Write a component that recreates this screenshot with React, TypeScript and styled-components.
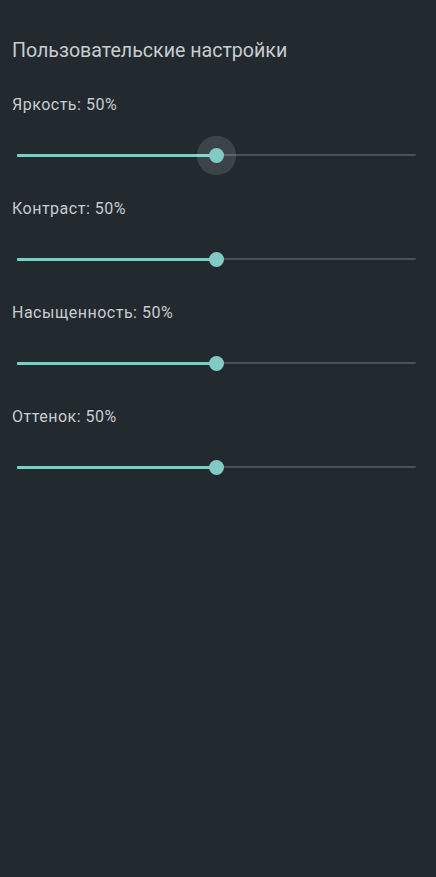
import React, { useState } from "react";
import styled, { createGlobalStyle } from "styled-components";

const GlobalStyle = createGlobalStyle`
  html, body {
    margin: 0;
    padding: 0;
    background: #222a30;
  }
  body {
    font-family: Roboto, "Noto Sans", sans-serif;
  }
`;

const Page = styled.div`
  min-height: 877px;
  background: #222a30;
  padding: 39px 12px 0 12px;
  box-sizing: border-box;
  color: #c8cccf;
`;

const Title = styled.h1`
  margin: 0 0 32px 0;
  font-size: 19.6px;
  line-height: 24px;
  font-weight: 400;
  color: #c8cccf;
`;

const Section = styled.div`
  display: flex;
  flex-direction: column;
`;

const Label = styled.div`
  font-size: 16px;
  line-height: 20px;
  letter-spacing: 0.5px;
  color: #c8cccf;
`;

const SliderRow = styled.div`
  position: relative;
  height: 22px;
  margin: 29px 8px 33px 5px;
  display: flex;
  align-items: center;
`;

const Track = styled.div`
  position: relative;
  flex: 1;
  height: 2px;
  background: #4b5257;
  border-radius: 1px;
`;

const Fill = styled.div<{ $value: number }>`
  position: absolute;
  left: 0;
  top: -0.5px;
  height: 3px;
  width: ${(p) => p.$value}%;
  background: #80cbc4;
  border-radius: 1px;
`;

const Thumb = styled.div<{ $value: number; $focused?: boolean }>`
  position: absolute;
  top: 50%;
  left: ${(p) => p.$value}%;
  width: 15px;
  height: 15px;
  margin: -7.5px 0 0 -7.5px;
  border-radius: 50%;
  background: #80cbc4;
  box-shadow: ${(p) => (p.$focused ? "0 0 0 12px rgba(255,255,255,0.12)" : "none")};
`;

type Item = { label: string; value: number };

function Slider({ value, focused }: { value: number; focused?: boolean }) {
  return (
    <SliderRow>
      <Track>
        <Fill $value={value} />
        <Thumb $value={value} $focused={focused} />
      </Track>
    </SliderRow>
  );
}

export default function App() {
  const [items] = useState<Item[]>([
    { label: "Яркость", value: 50 },
    { label: "Контраст", value: 50 },
    { label: "Насыщенность", value: 50 },
    { label: "Оттенок", value: 50 },
  ]);

  return (
    <>
      <GlobalStyle />
      <Page>
        <Title>Пользовательские настройки</Title>
        {items.map((it, i) => (
          <Section key={it.label}>
            <Label>
              {it.label}: {it.value}%
            </Label>
            <Slider value={it.value} focused={i === 0} />
          </Section>
        ))}
      </Page>
    </>
  );
}
